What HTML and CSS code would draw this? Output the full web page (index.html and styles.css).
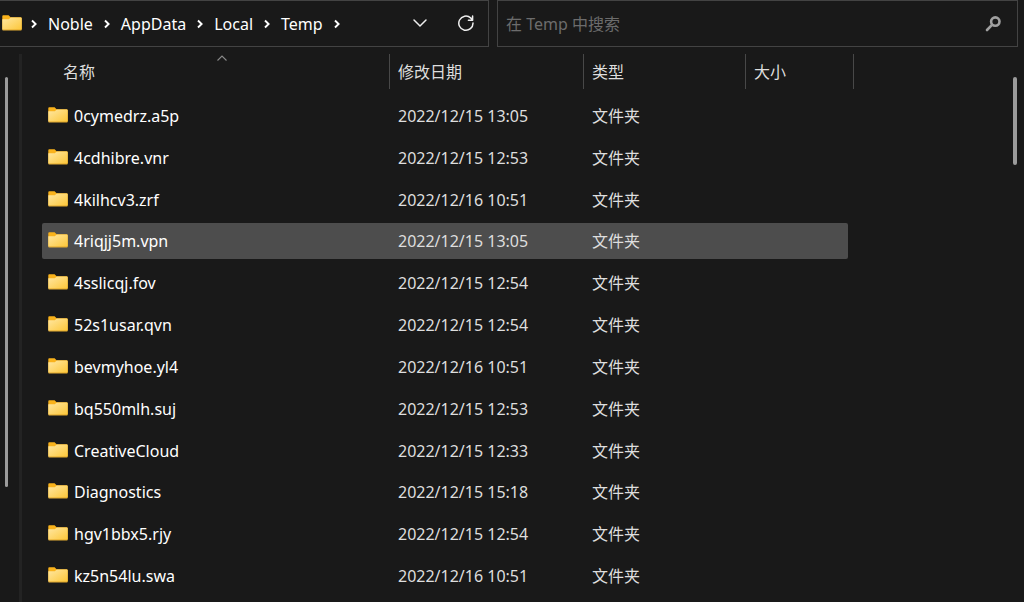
FILE: index.html
```html
<!DOCTYPE html>
<html lang="zh-CN">
<head>
<meta charset="utf-8">
<meta name="viewport" content="width=device-width, initial-scale=1">
<title>Temp</title>
<link rel="stylesheet" href="styles.css">
</head>
<body>
<svg class="defs" width="0" height="0" aria-hidden="true">
  <defs>
    <linearGradient id="folder-face" x1="0" y1="0" x2="1" y2="1">
      <stop offset="0" stop-color="#ffe7a2"/>
      <stop offset="1" stop-color="#fcc637"/>
    </linearGradient>
    <symbol id="folder" viewBox="0 0 20 16">
      <path d="M1.2 0.3H6.6L8.6 2.2H18.6Q19.7 2.2 19.7 3.3V14H0.3V1.2Q0.3 0.3 1.2 0.3Z" fill="#f9b21b"/>
      <path d="M0.3 4.3H6.8L8.8 2.6H18.8Q19.7 2.6 19.7 3.5V14.4Q19.7 15.2 18.9 15.2H1.1Q0.3 15.2 0.3 14.4Z" fill="url(#folder-face)"/>
      <path d="M0.5 14.9H19.5" stroke="#dfa428" stroke-width="0.8"/>
    </symbol>
    <symbol id="chevron" viewBox="0 0 8 10">
      <path d="M2 1.5L5.6 5L2 8.5" fill="none" stroke="#fff" stroke-width="1.9"/>
    </symbol>
  </defs>
</svg>

<header class="toolbar">
  <nav class="address" aria-label="地址">
    <svg class="folder"><use href="#folder"/></svg>
    <svg class="chevron"><use href="#chevron"/></svg>
    <a class="crumb" href="#">Noble</a>
    <svg class="chevron"><use href="#chevron"/></svg>
    <a class="crumb" href="#">AppData</a>
    <svg class="chevron"><use href="#chevron"/></svg>
    <a class="crumb" href="#">Local</a>
    <svg class="chevron"><use href="#chevron"/></svg>
    <a class="crumb" href="#">Temp</a>
    <svg class="chevron"><use href="#chevron"/></svg>
    <div class="actions">
      <button class="icon-button" type="button" aria-label="历史记录">
        <svg width="16" height="16" viewBox="0 0 16 16"><path d="M2 4L8 10L14 4" fill="none" stroke="#eee" stroke-width="1.5" stroke-linecap="round"/></svg>
      </button>
      <button class="icon-button" type="button" aria-label="刷新">
        <svg width="18" height="18" viewBox="0 0 18 18"><path d="M16 8A7.1 7.1 0 1 1 13.6 2.9L15.4 4.6M15.6 1V5.2H11.4" fill="none" stroke="#eee" stroke-width="1.5" stroke-linecap="round" stroke-linejoin="round"/></svg>
      </button>
    </div>
  </nav>
  <form class="search">
    <input class="search-input" type="text" placeholder="在 Temp 中搜索" aria-label="在 Temp 中搜索">
    <button class="icon-button" type="button" aria-label="搜索">
      <svg width="18" height="18" viewBox="0 0 18 18"><circle cx="11.3" cy="6.6" r="4.2" fill="none" stroke="#a0a0a0" stroke-width="2.6"/><path d="M8 9.9L3 15" stroke="#a0a0a0" stroke-width="2.6" stroke-linecap="round"/></svg>
    </button>
  </form>
</header>

<main class="content">
  <aside class="sidebar"><div class="sidebar-thumb"></div></aside>
  <table class="files">
    <thead>
      <tr class="columns">
        <th class="column name-column" scope="col">名称<svg class="sort" width="12" height="8" viewBox="0 0 12 8"><path d="M1.5 6.5L6 2L10.5 6.5" fill="none" stroke="#8a8a8a" stroke-width="1.1"/></svg></th>
        <th class="column" scope="col">修改日期</th>
        <th class="column" scope="col">类型</th>
        <th class="column" scope="col">大小</th>
      </tr>
    </thead>
    <tbody>
      <tr class="file"><td class="name"><svg class="folder"><use href="#folder"/></svg>0cymedrz.a5p</td><td>2022/12/15 13:05</td><td>文件夹</td><td></td></tr>
      <tr class="file"><td class="name"><svg class="folder"><use href="#folder"/></svg>4cdhibre.vnr</td><td>2022/12/15 12:53</td><td>文件夹</td><td></td></tr>
      <tr class="file"><td class="name"><svg class="folder"><use href="#folder"/></svg>4kilhcv3.zrf</td><td>2022/12/16 10:51</td><td>文件夹</td><td></td></tr>
      <tr class="file hovered"><td class="name"><svg class="folder"><use href="#folder"/></svg>4riqjj5m.vpn</td><td>2022/12/15 13:05</td><td>文件夹</td><td></td></tr>
      <tr class="file"><td class="name"><svg class="folder"><use href="#folder"/></svg>4sslicqj.fov</td><td>2022/12/15 12:54</td><td>文件夹</td><td></td></tr>
      <tr class="file"><td class="name"><svg class="folder"><use href="#folder"/></svg>52s1usar.qvn</td><td>2022/12/15 12:54</td><td>文件夹</td><td></td></tr>
      <tr class="file"><td class="name"><svg class="folder"><use href="#folder"/></svg>bevmyhoe.yl4</td><td>2022/12/16 10:51</td><td>文件夹</td><td></td></tr>
      <tr class="file"><td class="name"><svg class="folder"><use href="#folder"/></svg>bq550mlh.suj</td><td>2022/12/15 12:53</td><td>文件夹</td><td></td></tr>
      <tr class="file"><td class="name"><svg class="folder"><use href="#folder"/></svg>CreativeCloud</td><td>2022/12/15 12:33</td><td>文件夹</td><td></td></tr>
      <tr class="file"><td class="name"><svg class="folder"><use href="#folder"/></svg>Diagnostics</td><td>2022/12/15 15:18</td><td>文件夹</td><td></td></tr>
      <tr class="file"><td class="name"><svg class="folder"><use href="#folder"/></svg>hgv1bbx5.rjy</td><td>2022/12/15 12:54</td><td>文件夹</td><td></td></tr>
      <tr class="file"><td class="name"><svg class="folder"><use href="#folder"/></svg>kz5n54lu.swa</td><td>2022/12/16 10:51</td><td>文件夹</td><td></td></tr>
    </tbody>
  </table>
  <div class="scrollbar"><div class="scroll-thumb"></div></div>
</main>
</body>
</html>
```
FILE: styles.css
```css
* {
  box-sizing: border-box;
}

body {
  display: flex;
  flex-direction: column;
  min-height: 100vh;
  margin: 0;
  background: #191919;
  color: #fff;
  font: 16px/24px "Noto Sans", "Noto Sans CJK SC", sans-serif;
}

.defs {
  position: absolute;
}

.toolbar {
  display: grid;
  grid-template-columns: 489fr 521fr;
  gap: 8px;
  padding-right: 6px;
}

.address,
.search {
  display: flex;
  align-items: center;
  min-height: 47px;
  border: 1px solid #434343;
}

.address {
  gap: 10px;
  padding: 0 12px 0 2px;
  border-left: 0;
}

.address .folder {
  margin-right: -2px;
}

.search {
  padding: 0 14px 0 8px;
}

.folder {
  flex: none;
  width: 20px;
  height: 16px;
  margin-bottom: 2px;
}

.chevron {
  flex: none;
  width: 8px;
  height: 10px;
}

.crumb {
  color: #fff;
  text-decoration: none;
}

.actions {
  display: flex;
  gap: 26px;
  margin-left: auto;
}

.icon-button {
  display: grid;
  place-items: center;
  width: 20px;
  height: 24px;
  padding: 0;
  border: 0;
  background: none;
}

.search-input {
  flex: 1;
  min-width: 0;
  padding: 0;
  border: 0;
  outline: 0;
  background: none;
  color: #fff;
  font: inherit;
}

.search-input::placeholder {
  color: #6c6c6c;
  opacity: 1;
}

.content {
  display: flex;
  flex: 1;
  padding-top: 7px;
}

.sidebar {
  flex: none;
  width: 22px;
  padding: 23px 0 115px 5px;
  border-right: 3px solid #232323;
}

.sidebar-thumb {
  width: 3px;
  height: 100%;
  border-radius: 2px;
  background: #9b9b9b;
}

.files {
  display: flex;
  flex: 1;
  flex-direction: column;
  padding: 0 0 5px 20px;
}

.files thead,
.files tbody {
  display: grid;
}

.files tbody {
  flex: 1;
  grid-auto-rows: 1fr;
  padding-top: 6px;
}

.columns,
.file {
  display: grid;
  grid-template-columns: 348px 194px 162px 102px;
  align-items: center;
  justify-self: start;
}

.columns {
  grid-template-columns: 348px 194px 162px 108px;
}

.column {
  position: relative;
  padding: 6px 8px 5px;
  border-right: 1px solid #484848;
  color: #dedede;
  font-weight: 400;
  text-align: left;
}

.name-column {
  padding-left: 21px;
}

.sort {
  position: absolute;
  top: 0;
  left: 174px;
}

.file {
  margin: 3px 0;
  border-radius: 2px;
}

.hovered {
  background: #4d4d4d;
}

.file td {
  padding: 0 8px;
  color: #dedede;
}

.file .name {
  display: flex;
  align-items: center;
  gap: 6px;
  padding-left: 6px;
  color: #fff;
}

.scrollbar {
  flex: none;
  width: 11px;
  padding-top: 23px;
}

.scroll-thumb {
  width: 4px;
  height: 88px;
  border-radius: 2px;
  background: #9b9b9b;
}
```
